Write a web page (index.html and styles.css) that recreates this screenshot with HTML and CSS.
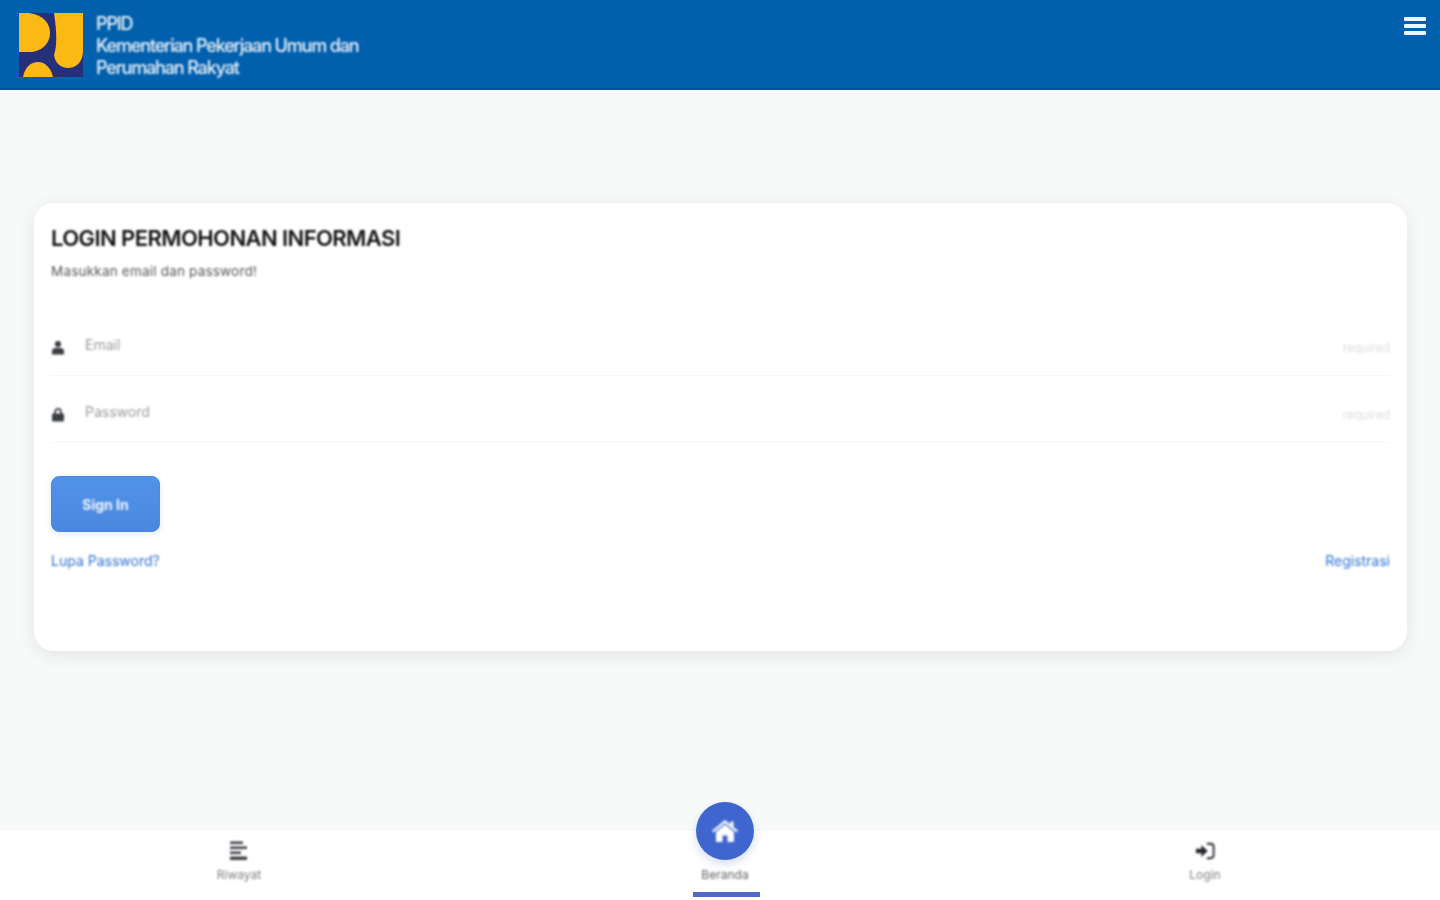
FILE: index.html
```html
<!DOCTYPE html>
<html lang="id">
<head>
    <meta charset="UTF-8">
    <meta name="viewport" content="width=device-width, initial-scale=1.0">
    <title>PPID - Login</title>
    <link rel="stylesheet" href="styles.css">
</head>
<body>
    <header class="top-bar">
        <svg class="logo" viewBox="0 0 64 64" aria-hidden="true">
            <rect width="64" height="64" fill="#26307a"/>
            <path fill="#fdb913" d="M0 0H10C24 2 31 10 31 20C31 31 22 39 10 39H0Z"/>
            <path fill="#fdb913" d="M4 64C6 54 12 49 19 49C26 49 32 55 34 64Z"/>
            <path fill="#fdb913" d="M35 0H64V38C64 49 57 55 49 55C42 55 36 50 35 42C38 33 38 20 35 0Z"/>
        </svg>
        <div class="brand">
            <div>PPID</div>
            <div>Kementerian Pekerjaan Umum dan</div>
            <div>Perumahan Rakyat</div>
        </div>
        <button class="menu-btn" aria-label="Menu">
            <span></span><span></span><span></span>
        </button>
    </header>

    <main class="content">
        <section class="card">
            <h1>LOGIN PERMOHONAN INFORMASI</h1>
            <p class="hint">Masukkan email dan password!</p>

            <div class="field">
                <svg class="field-icon" viewBox="0 0 14 14" aria-hidden="true">
                    <circle cx="7" cy="3.6" r="3.1" fill="#3a3d42"/>
                    <path fill="#3a3d42" d="M1 14V10.6C1 8.8 2.6 7.6 4.4 7.6H9.6C11.4 7.6 13 8.8 13 10.6V14Z"/>
                </svg>
                <input type="text" placeholder="Email">
                <span class="req">required</span>
            </div>
            <div class="field">
                <svg class="field-icon" viewBox="0 0 14 14" aria-hidden="true">
                    <path fill="none" stroke="#3a3d42" stroke-width="1.8" d="M4 6.5V4.4C4 2.7 5.3 1.4 7 1.4C8.7 1.4 10 2.7 10 4.4V6.5"/>
                    <rect x="1" y="6" width="12" height="8" rx="1" fill="#3a3d42"/>
                </svg>
                <input type="password" placeholder="Password">
                <span class="req">required</span>
            </div>

            <button class="sign-in"><span>Sign In</span></button>

            <div class="links">
                <a href="#">Lupa Password?</a>
                <a href="#">Registrasi</a>
            </div>
        </section>
    </main>

    <nav class="bottom-nav">
        <a class="nav-item" href="#">
            <svg class="nav-icon" viewBox="0 0 20 20" aria-hidden="true">
                <path fill="#3d4046" d="M1 0.500H14V3H1ZM1 5.500H18V8H1ZM1 10.500H12V13H1ZM1 15.500H18V19H1Z"/>
            </svg>
            <span>Riwayat</span>
        </a>
        <a class="nav-item active" href="#">
            <span class="fab">
                <svg viewBox="0 0 26 22" aria-hidden="true">
                    <path fill="#fff" d="M13 4.6L22 12V21C22 21.6 21.6 22 21 22H15.5V15.5H10.5V22H5C4.4 22 4 21.6 4 21V12Z"/>
                    <path fill="#fff" d="M13 0L18.500 4.500V1.500H21.500V7L26 10.700L24.600 12.400L13 2.900L1.400 12.400L0 10.700Z"/>
                </svg>
            </span>
            <span>Beranda</span>
            <i class="indicator"></i>
        </a>
        <a class="nav-item" href="#">
            <svg class="nav-icon" viewBox="0 0 22 20" aria-hidden="true">
                <path fill="#26292e" d="M1 7.500H7V3.500L14 10L7 16.500V12.500H1Z"/>
                <path fill="none" stroke="#26292e" stroke-width="2" d="M13 2H17C19 2 20.500 3.500 20.500 5.500V14.500C20.500 16.500 19 18 17 18H13"/>
            </svg>
            <span>Login</span>
        </a>
    </nav>
</body>
</html>
```

FILE: styles.css
```css
* {
    margin: 0;
    padding: 0;
    box-sizing: border-box;
    font-family: 'Inter', 'Liberation Sans', sans-serif;
}

body {
    display: flex;
    flex-direction: column;
    height: 100vh;
    overflow: hidden;
    background: #f8fafa;
}

/* header */
.top-bar {
    display: flex;
    align-items: flex-start;
    height: 90px;
    padding: 13px 14px 0 19px;
    background: #0060ae;
    border-bottom: 2px solid #0052a3;
}

.logo {
    width: 64px;
    height: 64px;
    flex: none;
}

.brand {
    margin-left: 13px;
    color: #eef3fa;
    font-size: 18px;
    font-weight: 500;
    line-height: 22px;
    letter-spacing: -1.15px;
    filter: blur(0.8px);
}

.menu-btn {
    display: flex;
    flex-direction: column;
    gap: 3px;
    width: 22px;
    margin-left: auto;
    margin-top: 4px;
    background: none;
    border: 0;
}

.menu-btn span {
    display: block;
    height: 4px;
    border-radius: 1px;
    background: #f2f4fb;
}

/* login card */
.content {
    flex: 1;
    padding: 113px 33px 0 34px;
}

.card {
    height: 448px;
    padding: 23px 17px 0;
    background: #fff;
    border-radius: 20px;
    box-shadow: 0 4px 18px rgba(0, 0, 0, 0.09);
}

.card h1 {
    color: #101114;
    font-size: 22px;
    font-weight: 600;
    line-height: 24px;
    letter-spacing: -0.58px;
    filter: blur(0.8px);
}

.hint {
    margin-top: 12px;
    color: #55585d;
    font-size: 13.5px;
    line-height: 18px;
    letter-spacing: 0.2px;
    filter: blur(0.8px);
}

.field {
    display: flex;
    align-items: center;
    height: 67px;
    padding-top: 5px;
    border-bottom: 1px solid #f6f7f7;
}

.hint + .field {
    margin-top: 29px;
}

.field-icon {
    width: 14px;
    height: 15px;
    flex: none;
    margin-top: 6px;
    filter: blur(0.8px);
}

.field input {
    flex: 1;
    margin-left: 20px;
    border: 0;
    outline: 0;
    background: none;
    font-size: 14px;
    filter: blur(0.8px);
}

.field input::placeholder {
    color: #9a9c9f;
}

.req {
    margin-top: 5px;
    color: #dcdddd;
    font-size: 12px;
    filter: blur(0.8px);
}

.sign-in {
    display: block;
    width: 109px;
    height: 56px;
    margin-top: 33px;
    border: 1px solid #4a8ae2;
    border-radius: 8px;
    background: linear-gradient(#5193e8, #4a88df);
    color: #f3f7fd;
    font-size: 14px;
    font-weight: 700;
    box-shadow: 0 2px 6px rgba(74, 136, 223, 0.18);
}

.sign-in span {
    display: block;
    filter: blur(0.8px);
}

.links {
    display: flex;
    justify-content: space-between;
    margin-top: 20px;
    filter: blur(0.8px);
}

.links a {
    color: #2f73d2;
    font-size: 14px;
    line-height: 18px;
    text-decoration: none;
}

/* bottom navigation */
.bottom-nav {
    display: grid;
    grid-template-columns: 478px 494px 466px;
    height: 71px;
    background: #fff;
    border-top: 1px solid #f1f3f3;
}

.nav-item {
    display: flex;
    flex-direction: column;
    align-items: center;
    padding-top: 11px;
    color: #7e8083;
    font-size: 12px;
    line-height: 16px;
    text-decoration: none;
}

.nav-item > span:last-of-type {
    margin-top: 6px;
    filter: blur(0.8px);
}

.nav-icon {
    width: 20px;
    height: 20px;
    filter: blur(0.8px);
}

.active {
    position: relative;
    color: #606266;
}

.active > span:last-of-type {
    margin-top: 7px;
}

.fab {
    display: flex;
    align-items: center;
    justify-content: center;
    width: 58px;
    height: 58px;
    margin-top: -39px;
    border-radius: 50%;
    background: #3f66cf;
    box-shadow: 0 4px 10px rgba(63, 102, 207, 0.22);
}

.fab svg {
    width: 26px;
    height: 22px;
    filter: blur(0.8px);
}

.indicator {
    position: absolute;
    left: 215px;
    top: 62px;
    width: 67px;
    height: 5px;
    background: #5468c8;
}
```
